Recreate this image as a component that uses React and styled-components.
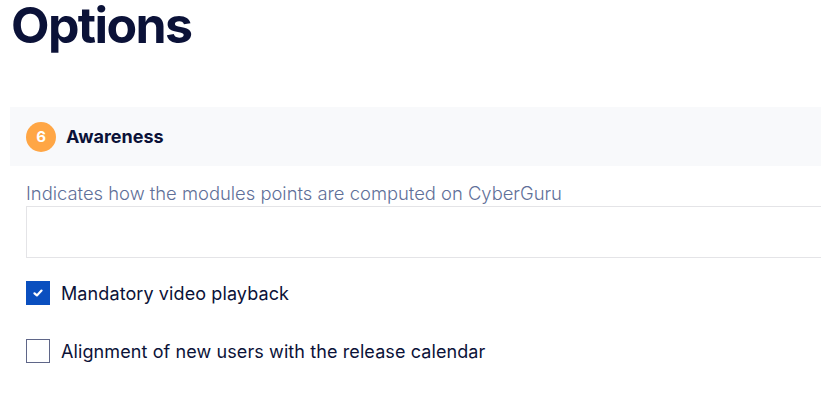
import React, { useState } from "react";
import styled, { createGlobalStyle } from "styled-components";

const GlobalStyle = createGlobalStyle`
  body {
    margin: 0;
    background: #ffffff;
    font-family: Inter, "Noto Sans", sans-serif;
    color: #0b1238;
  }
`;

const Page = styled.div`
  display: flex;
  flex-direction: column;
  width: 100vw;
  overflow: hidden;
`;

const Title = styled.h1`
  margin: 0;
  padding: 0 0 0 11px;
  font-size: 50px;
  line-height: 50px;
  font-weight: 700;
  letter-spacing: -1.6px;
  color: #0b1238;
`;

const Section = styled.section`
  display: flex;
  flex-direction: column;
  margin: 57px 0 0 10px;
`;

const SectionHeader = styled.div`
  display: flex;
  align-items: center;
  gap: 10px;
  height: 59px;
  padding-left: 16px;
  background: #f8f9fb;
`;

const Badge = styled.span`
  display: flex;
  align-items: center;
  justify-content: center;
  width: 30px;
  height: 30px;
  border-radius: 50%;
  background: #ffa645;
  color: #ffffff;
  font-size: 15px;
  font-weight: 700;
`;

const SectionTitle = styled.span`
  font-size: 18px;
  font-weight: 700;
  color: #0b1238;
`;

const Body = styled.div`
  display: flex;
  flex-direction: column;
  padding: 16px 0 0 16px;
`;

const Hint = styled.label`
  font-size: 18.4px;
  font-weight: 300;
  color: #5f7099;
  line-height: 22px;
`;

const TextField = styled.input`
  box-sizing: border-box;
  height: 52px;
  margin-top: 2px;
  width: calc(100% + 40px);
  border: 1px solid #e4e4e7;
  border-radius: 0;
  outline: none;
  font: inherit;
`;

const OptionRow = styled.label`
  display: flex;
  align-items: center;
  gap: 11px;
  margin-top: ${(p) => p.$top}px;
  font-size: 18px;
  letter-spacing: 0.1px;
  color: #0b1238;
  cursor: pointer;
`;

const Box = styled.span`
  box-sizing: border-box;
  display: flex;
  align-items: center;
  justify-content: center;
  width: 24px;
  height: 24px;
  background: ${(p) => (p.$checked ? "#0a4fbf" : "#ffffff")};
  border: ${(p) => (p.$checked ? "none" : "1.5px solid #5f6688")};
`;

const Checkbox = ({ label, checked, onToggle, top }) => (
  <OptionRow $top={top} onClick={onToggle}>
    <Box $checked={checked}>
      {checked && (
        <svg width="10" height="8" viewBox="0 0 10 8">
          <path
            d="M1.5 4.3 L3.9 6.4 L8.5 1.6"
            fill="none"
            stroke="#ffffff"
            strokeWidth="2.2"
            strokeLinecap="round"
            strokeLinejoin="round"
          />
        </svg>
      )}
    </Box>
    {label}
  </OptionRow>
);

const App = () => {
  const [video, setVideo] = useState(true);
  const [calendar, setCalendar] = useState(false);
  return (
    <Page>
      <GlobalStyle />
      <Title>Options</Title>
      <Section>
        <SectionHeader>
          <Badge>6</Badge>
          <SectionTitle>Awareness</SectionTitle>
        </SectionHeader>
        <Body>
          <Hint>Indicates how the modules points are computed on CyberGuru</Hint>
          <TextField />
          <Checkbox
            top={23}
            label="Mandatory video playback"
            checked={video}
            onToggle={() => setVideo(!video)}
          />
          <Checkbox
            top={34}
            label="Alignment of new users with the release calendar"
            checked={calendar}
            onToggle={() => setCalendar(!calendar)}
          />
        </Body>
      </Section>
    </Page>
  );
};

export default App;
